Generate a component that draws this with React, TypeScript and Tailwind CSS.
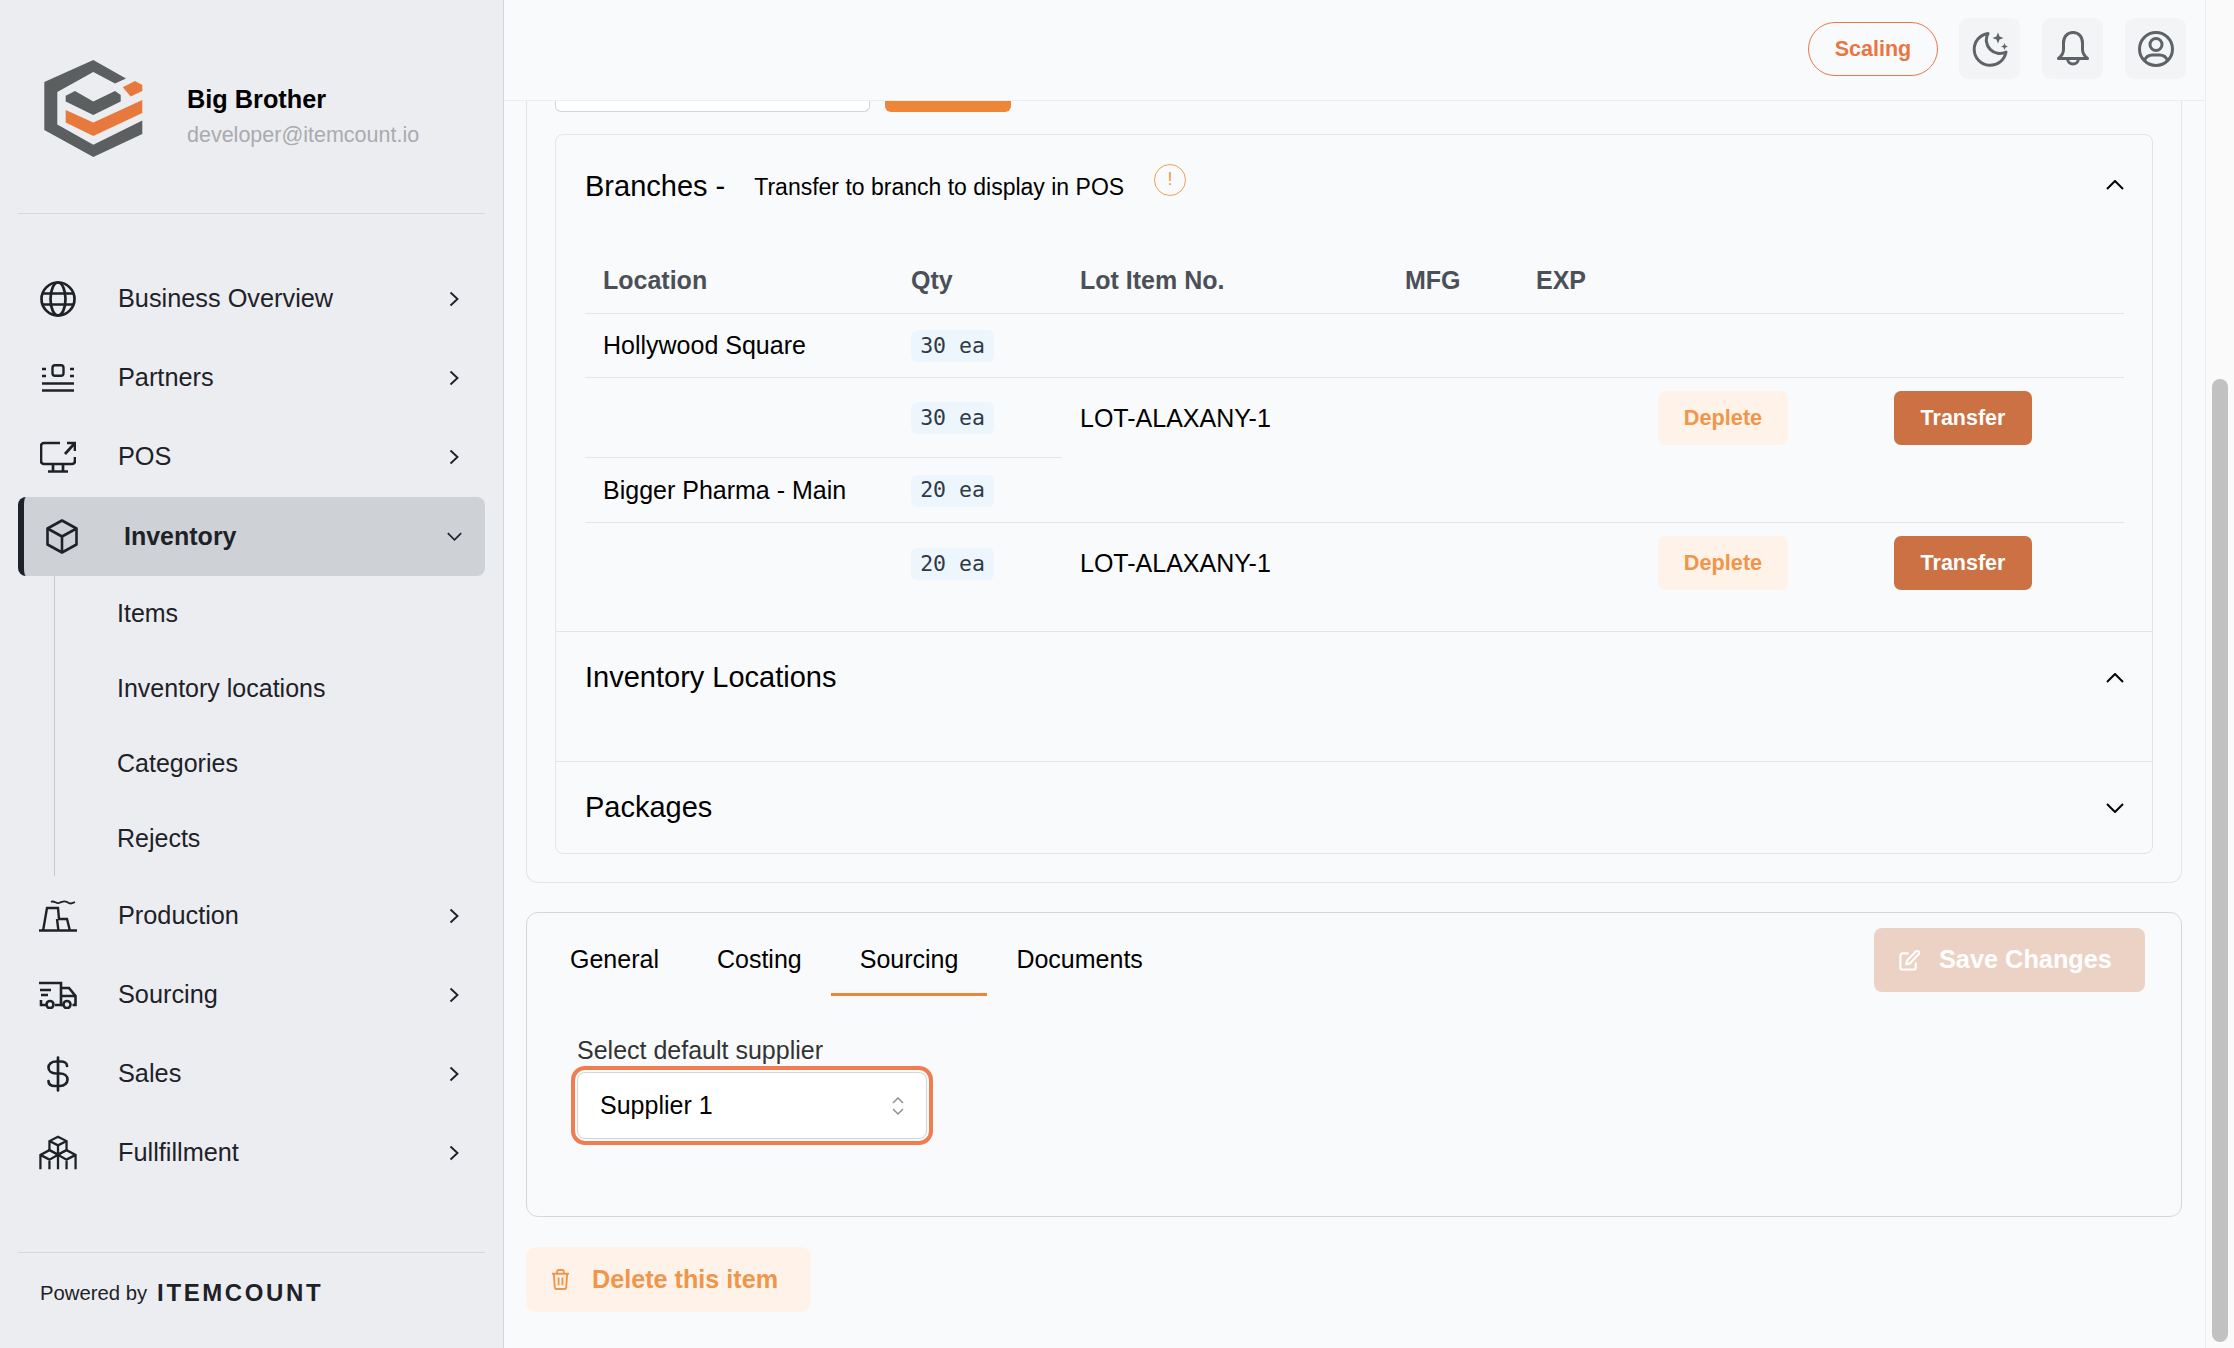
import type { ReactNode } from 'react';

function Chevron({ dir, className }: { dir: 'right' | 'down' | 'up'; className: string }) {
  if (dir === 'right') {
    return (
      <svg viewBox="0 0 10 16" className={className} fill="none" stroke="currentColor" strokeWidth="1.9">
        <path d="M1.500 1.500 8.500 8l-7 6.500" />
      </svg>
    );
  }
  return (
    <svg viewBox="0 0 18 10" className={className} fill="none" stroke="currentColor" strokeWidth="2">
      <path d={dir === 'down' ? 'M1 1l8 8 8-8' : 'M1 9l8-8 8 8'} />
    </svg>
  );
}

function Logo() {
  return (
    <svg viewBox="0 0 99 97" className="w-[99px] h-[97px] shrink-0">
      <path
        fill="#5c5f60"
        d="M49.300 0 82 18.500 71 23.400 49.300 12 13.300 32v32.400l36 20.300 49-24.200V74l-49 23L.3 70V22z"
      />
      <path fill="#5c5f60" d="M21.700 35.700 31 31l18.300 10.400L71 31l5.700 4v6.400L49.300 55 21.700 41.400z" />
      <path fill="#e8793d" d="M78.700 27.300 91 21l7.300 4v6l-11.600 5.400z" />
      <path fill="#e8793d" d="M21.700 50l27.600 12.500L98.300 40v13L49.300 76 21.700 62.500z" />
    </svg>
  );
}

const navIcon = 'fill-none stroke-current';

const GlobeIcon = (
  <svg viewBox="0 0 36 36" className={`w-[36px] h-[36px] ${navIcon}`} strokeWidth="2.700">
    <circle cx="18" cy="18" r="16.500" />
    <ellipse cx="18" cy="18" rx="7.500" ry="16.500" />
    <path d="M3 12.500h30M3 23.500h30" />
  </svg>
);

const PartnersIcon = (
  <svg viewBox="0 0 32 28" className={`w-[32px] h-[28px] ${navIcon}`} strokeWidth="2.400">
    <rect x="10.500" y="1.200" width="11" height="10.500" rx="2.500" />
    <path d="M0 5h4M28 5h4M0 12h4M28 12h4M0 19.500h32M0 26.500h32" />
  </svg>
);

const PosIcon = (
  <svg viewBox="0 0 36 32" className={`w-[36px] h-[32px] ${navIcon}`} strokeWidth="2.700">
    <path d="M20 2H4a3 3 0 0 0-3 3v15a3 3 0 0 0 3 3h28a3 3 0 0 0 3-3v-4" />
    <path d="M13 23v7M23 23v7M8 30.500h20M25 13 34 3M27 2h8v8" />
  </svg>
);

const BoxIcon = (
  <svg viewBox="0 0 32 35" className={`w-[32px] h-[35px] ${navIcon}`} strokeWidth="2.600" strokeLinejoin="round">
    <path d="M16 1.500 30.500 9.500v16L16 33.500 1.500 25.500v-16z" />
    <path d="M1.500 9.500 16 17.500l14.500-8M16 17.500v16" />
  </svg>
);

const ProductionIcon = (
  <svg viewBox="0 0 38 33" className={`w-[38px] h-[33px] ${navIcon}`} strokeWidth="2.400">
    <path d="M0 31.500h38M4 32 8 9h11l1 11h8l3 12M18 20l1.500 12" />
    <path d="M12 3c3-2 5 2 8 1s5-3 8-1 4 2 8 0" strokeWidth="1.800" />
  </svg>
);

const TruckIcon = (
  <svg viewBox="0 0 38 28" className={`w-[38px] h-[28px] ${navIcon}`} strokeWidth="2.600">
    <path d="M0 2h22v22h-6M7 24H2v-5M1 9h11M2 14h7" />
    <path d="M22 7h8l6.500 8v9h-3M24 24h-2M22 15h14" />
    <circle cx="11" cy="23.500" r="3.500" />
    <circle cx="28" cy="23.500" r="3.500" />
  </svg>
);

const DollarIcon = (
  <svg viewBox="0 0 22 36" className={`w-[22px] h-[36px] ${navIcon}`} strokeWidth="2.700" strokeLinecap="round">
    <path d="M11 1.500v33M20 10c0-3-3-4.500-6-4.500H9C4.500 5.500 1.500 8 1.500 11.500S4.500 17.500 9 17.500h4c4.500 0 7.500 2.500 7.500 6s-3 6.500-7.500 6.500H8c-3.500 0-6.500-1.500-6.500-5" />
  </svg>
);

const BoxesIcon = (
  <svg viewBox="0 0 40 35" className={`w-[40px] h-[35px] ${navIcon}`} strokeWidth="2.400">
    <path d="M20 1l9 4.500v9.500l-9 4.500-9-4.500V5.500zM11 5.500l9 4.500 9-4.500M20 10v9.500" />
    <path d="M11 15 1.500 20v15M11 15l9 5M20 20v15M29 15l-9 5M29 15l9.500 5v15M1.500 20l9.500 5 9-5 9 5 9.500-5M11 25v10M29 25v10" />
  </svg>
);

function NavRow({ icon, label }: { icon: ReactNode; label: string }) {
  return (
    <div className="flex items-center h-[79px] mx-[18px] pl-[21px] pr-[26px] text-[#1e2228]">
      <div className="w-[38px] flex justify-center shrink-0">{icon}</div>
      <span className="ml-[41px] text-[25.300px] flex-1">{label}</span>
      <Chevron dir="right" className="w-[10px] h-[16px]" />
    </div>
  );
}

function SubRow({ label }: { label: string }) {
  return <div className="flex items-center h-[75px] pl-[116px] text-[25px] text-[#1e2228]">{label}</div>;
}

function Sidebar() {
  return (
    <aside className="w-[504px] shrink-0 h-full flex flex-col bg-[#ecedf1] border-r border-[#d5d6da]">
      <div className="h-[214px] mx-[18px] border-b border-[#d7d8db] flex items-start pt-[60px] pl-[26px] shrink-0">
        <Logo />
        <div className="ml-[44px] mt-[21px]">
          <div className="text-[25.300px] leading-[36px] font-bold text-black">Big Brother</div>
          <div className="text-[21.500px] leading-[30px] mt-[3px] text-[#a9abae]">developer@itemcount.io</div>
        </div>
      </div>

      <nav className="mt-[45px] flex-1">
        <NavRow icon={GlobeIcon} label="Business Overview" />
        <NavRow icon={PartnersIcon} label="Partners" />
        <NavRow icon={PosIcon} label="POS" />
        <div className="flex items-center h-[79px] mt-px mx-[18px] pl-[22px] pr-[23px] bg-[#ced2d6] border-l-[6px] border-[#1e2228] rounded-[8px] text-[#1e2228]">
          <div className="w-[32px] flex justify-center shrink-0">{BoxIcon}</div>
          <span className="ml-[46px] text-[25px] font-bold flex-1">Inventory</span>
          <Chevron dir="down" className="w-[15px] h-[9px]" />
        </div>
        <div className="ml-[54px] border-l border-[#c5c7cb]">
          <div className="-ml-[54px]">
            <SubRow label="Items" />
            <SubRow label="Inventory locations" />
            <SubRow label="Categories" />
            <SubRow label="Rejects" />
          </div>
        </div>
        <NavRow icon={ProductionIcon} label="Production" />
        <NavRow icon={TruckIcon} label="Sourcing" />
        <NavRow icon={DollarIcon} label="Sales" />
        <NavRow icon={BoxesIcon} label="Fullfillment" />
      </nav>

      <div className="h-[96px] mx-[18px] border-t border-[#d7d8db] flex items-center pl-[22px] pb-[15px] shrink-0">
        <span className="text-[20.300px] text-[#1e2228]">Powered by</span>
        <span className="ml-[10px] text-[24px] font-bold tracking-[2.600px] text-[#1e2228]">ITEMCOUNT</span>
      </div>
    </aside>
  );
}

function TopButton({ children }: { children: ReactNode }) {
  return (
    <div className="w-[61px] h-[61px] rounded-[9px] bg-[#f3f4f6] flex items-center justify-center text-[#5f6368]">
      {children}
    </div>
  );
}

function Topbar() {
  return (
    <header className="h-[101px] shrink-0 border-b border-[#ecedf0] bg-[#f9fafc] flex items-start justify-end pt-[18px] pr-[19px]">
      <div className="w-[130px] h-[54px] mt-[4px] mr-[21px] rounded-full border border-[#e8784a] flex items-center justify-center text-[21.500px] font-bold text-[#e8773f]">
        Scaling
      </div>
      <div className="flex gap-[22px]">
        <TopButton>
          <svg viewBox="0 0 36 36" className="w-[36px] h-[36px]" fill="none" stroke="currentColor" strokeWidth="3">
            <path d="M16 2.500A16 16 0 1 0 34 21 13.500 13.500 0 0 1 16 2.500z" strokeLinejoin="round" />
            <path
              d="M26 1.500l1.600 3.900 3.900 1.600-3.900 1.600L26 12.500l-1.600-3.900L20.500 7l3.900-1.600zM32.500 12l1 2.500 2.500 1-2.500 1-1 2.500-1-2.500-2.500-1 2.500-1z"
              fill="currentColor"
              stroke="none"
            />
          </svg>
        </TopButton>
        <TopButton>
          <svg viewBox="0 0 32 36" className="w-[32px] h-[36px]" fill="none" stroke="currentColor" strokeWidth="3" strokeLinejoin="round">
            <path d="M16 1.500c-6 0-9.500 4.500-9.500 10.500v6.500c0 3.500-2 6.500-5 9h29c-3-2.500-5-5.500-5-9V12c0-6-3.500-10.500-9.500-10.500z" />
            <path d="M10.500 27.500a5.500 5.500 0 0 0 11 0" />
          </svg>
        </TopButton>
        <TopButton>
          <svg viewBox="0 0 36 36" className="w-[36px] h-[36px]" fill="none" stroke="currentColor" strokeWidth="3">
            <circle cx="18" cy="18" r="16.500" />
            <circle cx="18" cy="13.500" r="6" />
            <path d="M6.500 29.500c1.500-4 5-5.500 8-5.500h7c3 0 6.500 1.500 8 5.500" />
          </svg>
        </TopButton>
      </div>
    </header>
  );
}

function Qty({ value }: { value: string }) {
  return (
    <span className="flex items-center justify-center w-[83px] h-[32px] rounded-[6px] bg-[#eef6fd] font-['DejaVu_Sans_Mono',monospace] text-[21.500px] text-[#2f3a45]">
      {value}
    </span>
  );
}

function RowActions({ nudge }: { nudge?: boolean }) {
  const cell = nudge ? 'pl-[18px] pt-[2px]' : 'pl-[18px]';
  return (
    <>
      <td className={cell}>
        <button className="w-[130px] h-[54px] rounded-[7px] bg-[#fff3e9] text-[21.700px] font-bold text-[#f0954a]">
          Deplete
        </button>
      </td>
      <td className={cell}>
        <button className="w-[138px] h-[54px] rounded-[7px] bg-[#cc7144] text-[21.500px] font-bold text-white">
          Transfer
        </button>
      </td>
    </>
  );
}

const headCell = 'pl-[18px] text-left text-[25px] font-bold text-[#4b5057]';
const bodyCell = 'pl-[18px] pt-[2px] text-[25px] text-black';
const qtyCell = 'pl-[18px] pt-[2px]';
const line = 'border-b border-[#e2e4e8]';

function BranchTable() {
  return (
    <table className="mt-[14px] ml-[29px] w-[1539px] table-fixed">
      <colgroup>
        <col className="w-[308px]" />
        <col className="w-[169px]" />
        <col className="w-[325px]" />
        <col className="w-[131px]" />
        <col className="w-[122px]" />
        <col className="w-[236px]" />
        <col className="w-[248px]" />
      </colgroup>
      <thead>
        <tr className={`h-[64px] ${line}`}>
          <th className={headCell}>Location</th>
          <th className={headCell}>Qty</th>
          <th className={headCell}>Lot Item No.</th>
          <th className={headCell}>MFG</th>
          <th className={headCell}>EXP</th>
          <th />
          <th />
        </tr>
      </thead>
      <tbody>
        <tr className={`h-[64px] ${line}`}>
          <td className={bodyCell}>Hollywood Square</td>
          <td className={qtyCell}>
            <Qty value="30 ea" />
          </td>
          <td colSpan={5} />
        </tr>
        <tr className="h-[80px]">
          <td className={line} />
          <td className={`${qtyCell} ${line}`}>
            <Qty value="30 ea" />
          </td>
          <td className={bodyCell}>LOT-ALAXANY-1</td>
          <td />
          <td />
          <RowActions nudge />
        </tr>
        <tr className={`h-[65px] ${line}`}>
          <td className={bodyCell}>Bigger Pharma - Main</td>
          <td className={qtyCell}>
            <Qty value="20 ea" />
          </td>
          <td colSpan={5} />
        </tr>
        <tr className="h-[82px]">
          <td />
          <td className={qtyCell}>
            <Qty value="20 ea" />
          </td>
          <td className="pl-[18px] text-[25px] text-black">LOT-ALAXANY-1</td>
          <td />
          <td />
          <RowActions />
        </tr>
      </tbody>
    </table>
  );
}

function Accordion() {
  return (
    <div className="mt-[22px] border border-[#e2e4e8] rounded-[8px]">
      <div className="h-[497px] border-b border-[#e2e4e8]">
        <div className="h-[100px] flex items-center pl-[29px] pr-[28px]">
          <span className="pt-[3px] text-[29px] text-black">Branches -</span>
          <span className="ml-[29px] pt-[4px] text-[23px] text-black">Transfer to branch to display in POS</span>
          <span className="ml-[30px] mb-[11px] w-[32px] h-[32px] rounded-full border border-[#f0a050] flex items-center justify-center text-[18px] text-[#f0954a]">
            !
          </span>
          <Chevron dir="up" className="ml-auto w-[18px] h-[10px] text-black" />
        </div>
        <BranchTable />
      </div>
      <div className="h-[130px] border-b border-[#e2e4e8]">
        <div className="h-[92px] flex items-center pl-[29px] pr-[28px]">
          <span className="text-[29px] text-black">Inventory Locations</span>
          <Chevron dir="up" className="ml-auto w-[18px] h-[10px] text-black" />
        </div>
      </div>
      <div className="h-[91px] pt-[1px] flex items-center pl-[29px] pr-[28px]">
        <span className="text-[29px] text-black">Packages</span>
        <Chevron dir="down" className="ml-auto w-[18px] h-[10px] text-black" />
      </div>
    </div>
  );
}

function Tab({ label, active }: { label: string; active?: boolean }) {
  return (
    <div
      className={`h-[70px] px-[29px] pt-[1px] flex items-center text-[25px] text-black border-b-[3px] ${
        active ? 'border-[#ee8638]' : 'border-transparent'
      }`}
    >
      {label}
    </div>
  );
}

function SourcingCard() {
  return (
    <div className="mt-[29px] h-[305px] border border-[#d5d7dc] rounded-[12px]">
      <div className="flex items-start justify-between mt-[13px] pl-[14px] pr-[36px]">
        <div className="flex">
          <Tab label="General" />
          <Tab label="Costing" />
          <Tab label="Sourcing" active />
          <Tab label="Documents" />
        </div>
        <button className="mt-[2px] w-[271px] h-[64px] rounded-[8px] bg-[#ecd2c4] flex items-center pl-[25px] text-white">
          <svg viewBox="0 0 22 22" className="w-[21px] h-[21px]" fill="none" stroke="currentColor" strokeWidth="2.200" strokeLinejoin="round">
            <path d="M10 3.500H3.500a2 2 0 0 0-2 2v13a2 2 0 0 0 2 2h12a2 2 0 0 0 2-2V13" />
            <path d="M17.500 1.500a2 2 0 0 1 3 3L11.500 14l-4 1 1-4z" />
          </svg>
          <span className="ml-[19px] text-[25.300px] font-bold">Save Changes</span>
        </button>
      </div>
      <div className="mt-[39px] pl-[44px]">
        <div className="pl-[6px] text-[25px] leading-[30px] text-[#333]">Select default supplier</div>
        <div className="mt-[1px] w-[362px] h-[79px] rounded-[14px] border-[4px] border-[#f07c50] p-[2px]">
          <div className="h-full rounded-[8px] border border-[#d1d5db] bg-white flex items-center pl-[22px] pr-[21px]">
            <span className="text-[25px] text-black flex-1">Supplier 1</span>
            <svg viewBox="0 0 14 20" className="w-[14px] h-[20px]" fill="none" stroke="#8a8f98" strokeWidth="1.500">
              <path d="M2 7l5-5 5 5M2 13l5 5 5-5" />
            </svg>
          </div>
        </div>
      </div>
    </div>
  );
}

function Main() {
  return (
    <main className="flex-1 min-w-0 h-full flex flex-col bg-[#f9fafc]">
      <Topbar />
      <div className="flex-1 pl-[22px] pr-[23px] overflow-hidden">
        <div className="border border-t-0 border-[#e2e4e8] rounded-b-[12px] px-[28px] pb-[28px]">
          <div className="flex gap-[15px] h-[11px]">
            <div className="w-[315px] bg-white border border-t-0 border-[#d1d5db] rounded-b-[6px]" />
            <div className="w-[126px] bg-[#ee8638] rounded-b-[6px]" />
          </div>
          <Accordion />
        </div>
        <SourcingCard />
        <button className="mt-[30px] w-[285px] h-[65px] rounded-[10px] bg-[#fff3e9] flex items-center pl-[25px] text-[#f0954a]">
          <svg viewBox="0 0 20 22" className="w-[19px] h-[21px]" fill="none" stroke="currentColor" strokeWidth="2">
            <path d="M1 5h18M6.500 5V2.500A1.500 1.500 0 0 1 8 1h4a1.500 1.500 0 0 1 1.500 1.500V5M3 5l1 14.500A1.500 1.500 0 0 0 5.500 21h9a1.500 1.500 0 0 0 1.500-1.500L17 5M8 9v8M12 9v8" />
          </svg>
          <span className="ml-[22px] text-[25.200px] font-bold">Delete this item</span>
        </button>
      </div>
    </main>
  );
}

export default function App() {
  return (
    <div className="flex w-[2234px] h-[1348px] overflow-hidden font-['Liberation_Sans',Arial,sans-serif]">
      <Sidebar />
      <Main />
      <div className="w-[29px] shrink-0 h-full bg-[#fafafa] border-l border-[#ededed] flex flex-col pt-[379px] pb-[6px] pl-[6px] pr-[6px]">
        <div className="flex-1 rounded-full bg-[#c1c1c1]" />
      </div>
    </div>
  );
}
